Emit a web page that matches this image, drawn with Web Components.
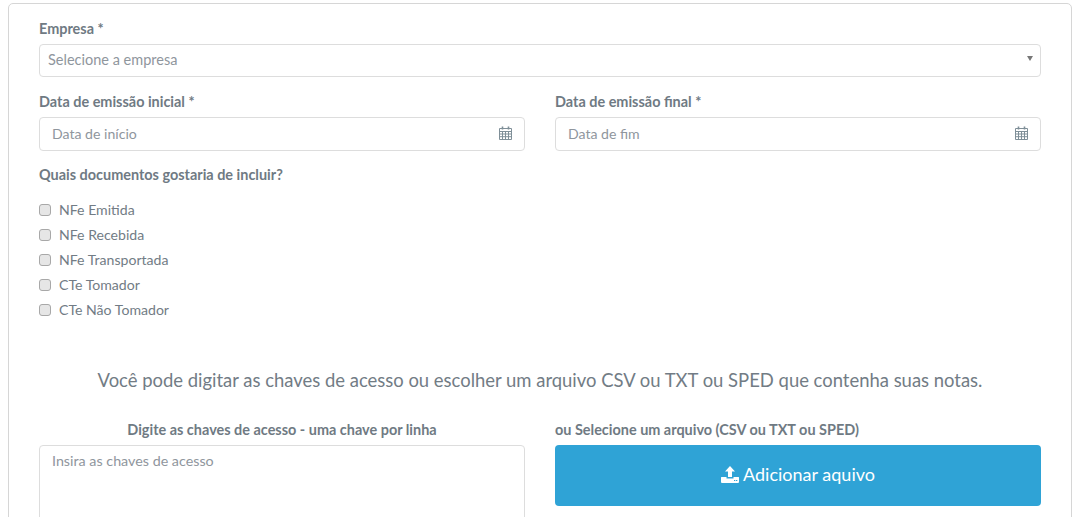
<!DOCTYPE html>
<html lang="pt-BR">
<head>
<meta charset="utf-8">
<title>Exportar notas</title>
<style>
  html, body { margin: 0; height: 517px; overflow: hidden; background: #fff; }
  body { font-family: Lato, "Liberation Sans", sans-serif; color: #6c7680; }
</style>
</head>
<body>
<export-form></export-form>

<script>
  class FormField extends HTMLElement {
    constructor() {
      super();
      const shadowRoot = this.attachShadow({mode: 'open'});
      shadowRoot.innerHTML = `<style>
    :host { display: block; }
    label { display: block; height: 17px; line-height: 17px; font-size: 14.45px; font-weight: 700; color: #6f7a83; margin-bottom: 7px; }
    :host([center]) label { text-align: center; }
  </style>
  <label>${this.getAttribute('label')}</label>
  <slot></slot>`;
    }
  }
  customElements.define('form-field', FormField);

  class SelectBox extends HTMLElement {
    constructor() {
      super();
      const shadowRoot = this.attachShadow({mode: 'open'});
      shadowRoot.innerHTML = `<style>
    :host { display: flex; align-items: center; justify-content: space-between; box-sizing: border-box; height: 33px; padding: 0 7px 2px 8px; border: 1px solid #ddd; border-radius: 4px; font-size: 14.5px; color: #8f969d; }
    svg { display: block; margin-top: -2px; }
  </style>
  <slot></slot>
  <svg width="6" height="5" viewBox="0 0 6 5"><path d="M0 0h6L3 5z" fill="#777"/></svg>`;
    }
  }
  customElements.define('select-box', SelectBox);

  class DateInput extends HTMLElement {
    constructor() {
      super();
      const shadowRoot = this.attachShadow({mode: 'open'});
      shadowRoot.innerHTML = `<style>
    :host { display: flex; align-items: center; justify-content: space-between; box-sizing: border-box; height: 34px; padding: 0 12px 2px 12px; border: 1px solid #ddd; border-radius: 4px; font-size: 14.1px; color: #8f969d; }
    svg { display: block; }
  </style>
  <slot></slot>
  <svg width="13" height="14" viewBox="0 0 13 14" fill="none" stroke="#7f8f98" stroke-width="1">
    <path d="M.5 2.500h12v11H.5zM.5 5.500h12M.5 8h12M.5 10.700h12M3.500 5.500v8M6.500 5.500v8M9.500 5.500v8"/>
    <path d="M3.500 .5v3M9.500 .5v3" stroke-width="1.600"/>
  </svg>`;
    }
  }
  customElements.define('date-input', DateInput);

  class CheckItem extends HTMLElement {
    constructor() {
      super();
      const shadowRoot = this.attachShadow({mode: 'open'});
      shadowRoot.innerHTML = `<style>
    :host { display: flex; align-items: center; gap: 8px; height: 25px; font-size: 14.1px; color: #727c85; }
    i { box-sizing: border-box; width: 12px; height: 12px; margin-top: 1px; border: 1px solid #a8a8a8; border-radius: 3px; background: #e6e6e6; }
  </style>
  <i></i><slot></slot>`;
    }
  }
  customElements.define('check-item', CheckItem);

  class ExportForm extends HTMLElement {
    constructor() {
      super();
      const shadowRoot = this.attachShadow({mode: 'open'});
      shadowRoot.innerHTML = `<style>
    :host { display: block; box-sizing: border-box; margin: 3px 11px 0 8px; padding: 16px 30px 0; height: 560px; border: 1px solid #d6d6d6; border-radius: 5px; }
    .row { display: grid; grid-template-columns: 486px 486px; column-gap: 30px; }
    .gap1 { margin-top: 16px; }
    .question { margin-top: 15px; height: 17px; line-height: 17px; font-size: 14.45px; font-weight: 700; color: #6f7a83; }
    .checks { margin-top: 14px; }
    h2 { margin: 46px 0 0; height: 24px; line-height: 24px; text-align: center; font-size: 18.45px; font-weight: 400; color: #727c85; }
    .gap2 { margin-top: 29px; }
    .area { box-sizing: border-box; height: 120px; padding: 6px 12px; border: 1px solid #ddd; border-radius: 4px; font-size: 14.3px; line-height: 17px; color: #8f969d; }
    .btn { box-sizing: border-box; display: flex; align-items: center; justify-content: center; gap: 4px; height: 61px; padding-bottom: 3px; border-radius: 4px; background: #2fa3d6; color: #fff; font-size: 18px; }
    svg { display: block; }
  </style>
  <form-field label="Empresa *"><select-box>Selecione a empresa</select-box></form-field>
  <div class="row gap1">
    <form-field label="Data de emissão inicial *"><date-input>Data de início</date-input></form-field>
    <form-field label="Data de emissão final *"><date-input>Data de fim</date-input></form-field>
  </div>
  <div class="question">Quais documentos gostaria de incluir?</div>
  <div class="checks">
    <check-item>NFe Emitida</check-item>
    <check-item>NFe Recebida</check-item>
    <check-item>NFe Transportada</check-item>
    <check-item>CTe Tomador</check-item>
    <check-item>CTe Não Tomador</check-item>
  </div>
  <h2>Você pode digitar as chaves de acesso ou escolher um arquivo CSV ou TXT ou SPED que contenha suas notas.</h2>
  <div class="row gap2">
    <form-field center label="Digite as chaves de acesso - uma chave por linha"><div class="area">Insira as chaves de acesso</div></form-field>
    <form-field label="ou Selecione um arquivo (CSV ou TXT ou SPED)">
      <div class="btn">
        <svg width="18" height="17" viewBox="0 0 18 17" fill="#fff"><path d="M9 0l5 5.500h-3V11H7V5.500H4zM.5 11H5.500v1.500h7V11H17.500a.5.500 0 0 1 .5.500V16a1 1 0 0 1-1 1H1a1 1 0 0 1-1-1V11.500a.5.500 0 0 1 .5-.5z"/><path d="M13 14h1.300v1H13zM15 14h1.300v1H15z" fill="#2fa3d6"/></svg>
        <span>Adicionar aquivo</span>
      </div>
    </form-field>
  </div>`;
    }
  }
  customElements.define('export-form', ExportForm);
</script>
</body>
</html>
